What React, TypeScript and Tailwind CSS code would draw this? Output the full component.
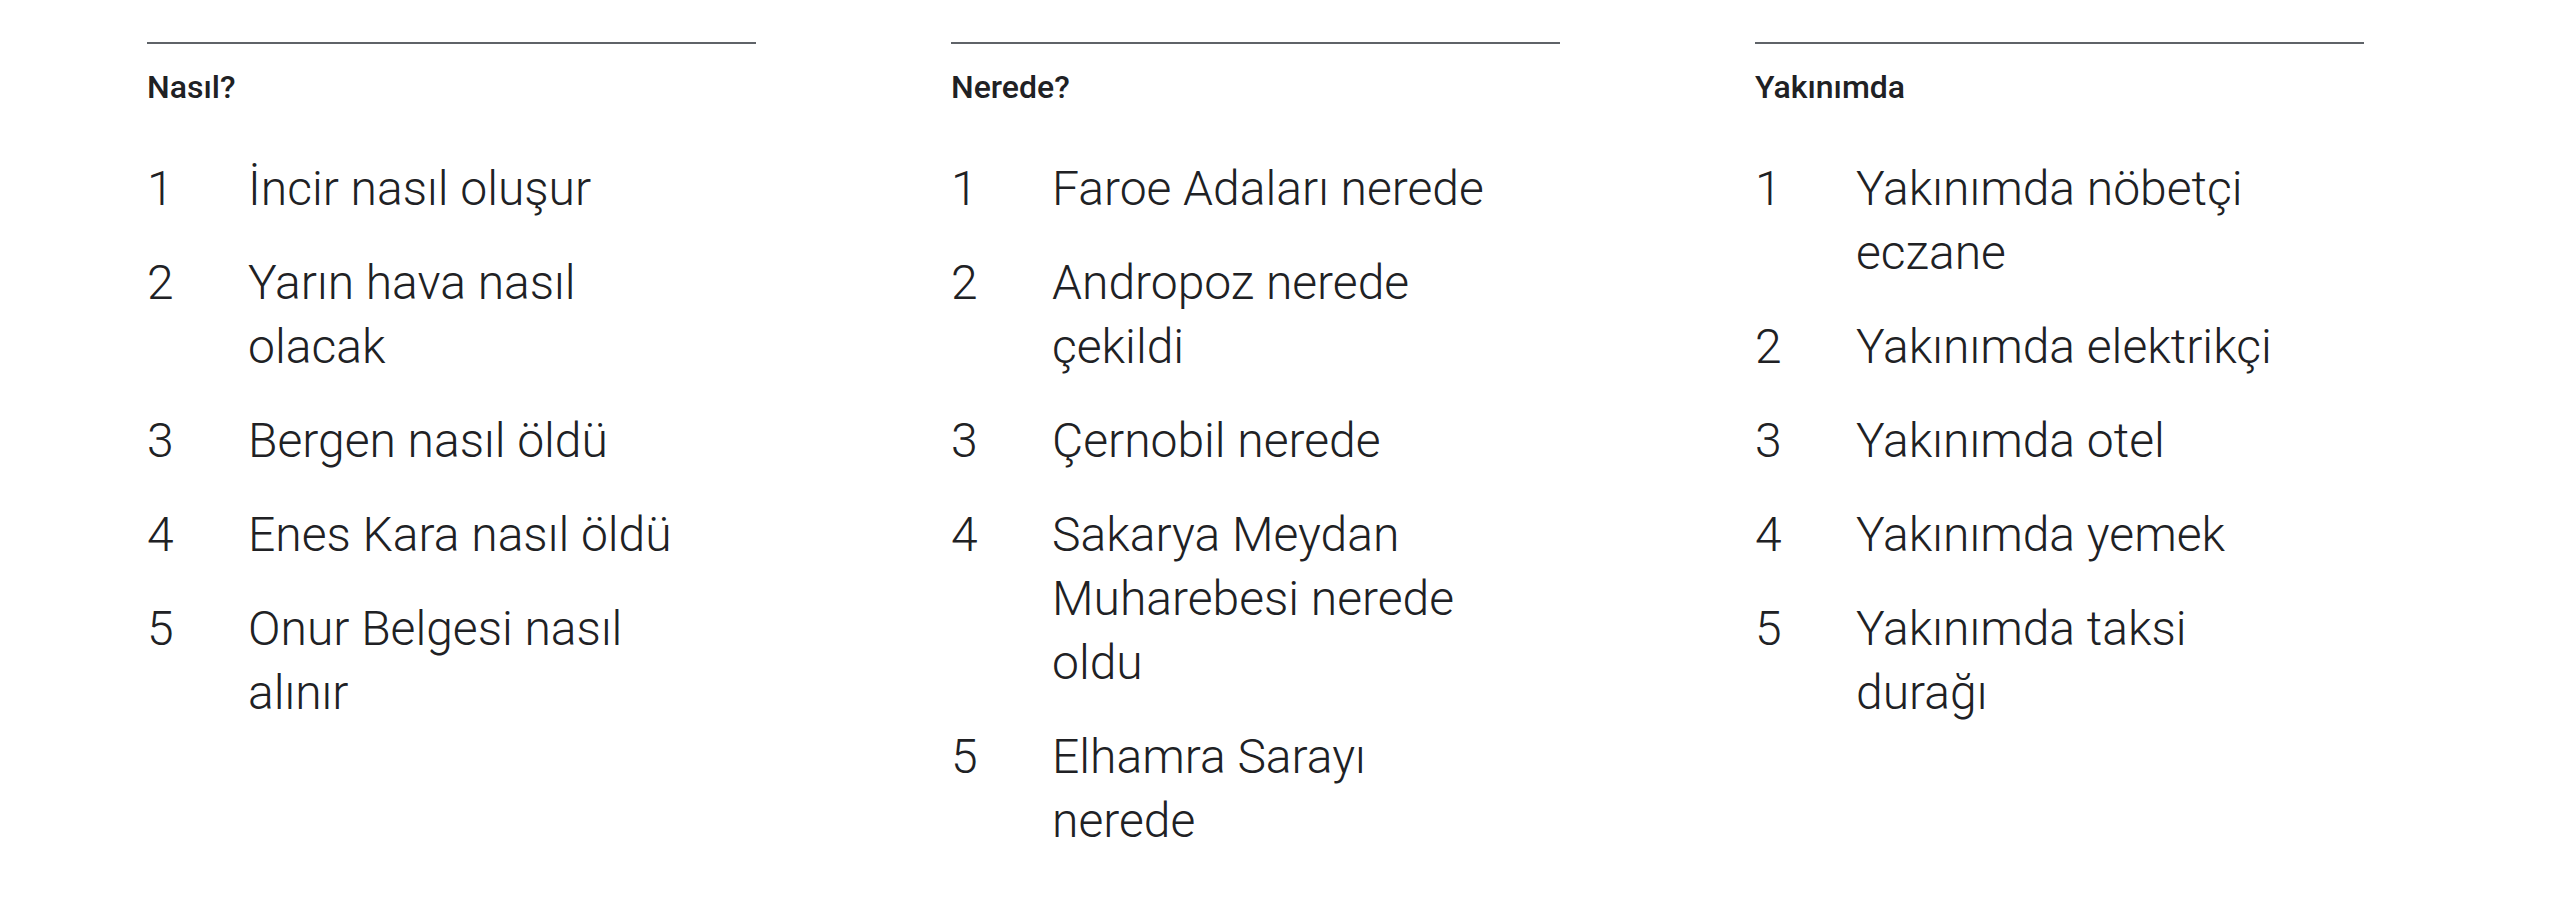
import React from 'react';

interface TrendColumnProps {
  title: string;
  items: string[];
}

const columns: TrendColumnProps[] = [
  {
    title: 'Nasıl?',
    items: [
      'İncir nasıl oluşur',
      'Yarın hava nasıl olacak',
      'Bergen nasıl öldü',
      'Enes Kara nasıl öldü',
      'Onur Belgesi nasıl alınır',
    ],
  },
  {
    title: 'Nerede?',
    items: [
      'Faroe Adaları nerede',
      'Andropoz nerede çekildi',
      'Çernobil nerede',
      'Sakarya Meydan Muharebesi nerede oldu',
      'Elhamra Sarayı nerede',
    ],
  },
  {
    title: 'Yakınımda',
    items: [
      'Yakınımda nöbetçi eczane',
      'Yakınımda elektrikçi',
      'Yakınımda otel',
      'Yakınımda yemek',
      'Yakınımda taksi durağı',
    ],
  },
];

function TrendColumn({ title, items }: TrendColumnProps) {
  return (
    <div className="w-[609px] border-t-2 border-[#5f6368]">
      <h3 className="mt-[23px] text-[32px] leading-[40px] font-medium text-[#202124]">{title}</h3>
      <ol className="mt-[50px] flex flex-col gap-[30px]">
        {items.map((item, i) => (
          <li key={item} className="flex text-[48px] leading-[64px] font-light text-[#202124]">
            <span className="w-[101px] shrink-0">{i + 1}</span>
            <span className="w-[444px]">{item}</span>
          </li>
        ))}
      </ol>
    </div>
  );
}

export default function App() {
  return (
    <div
      className="min-h-[898px] w-full bg-white pl-[147px] pt-[42px]"
      style={{ fontFamily: 'Roboto, "Liberation Sans", sans-serif' }}
    >
      <div className="flex gap-[195px]">
        {columns.map((col) => (
          <TrendColumn key={col.title} title={col.title} items={col.items} />
        ))}
      </div>
    </div>
  );
}
